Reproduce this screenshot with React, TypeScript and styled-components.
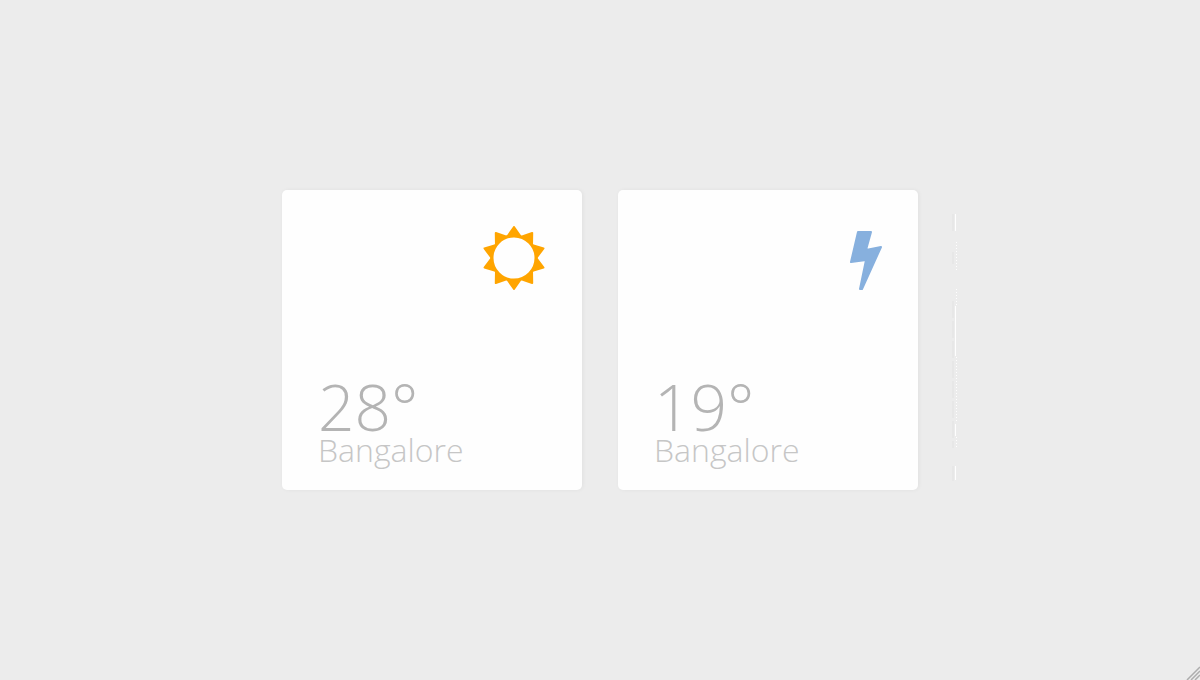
import React from "react";
import styled, { createGlobalStyle } from "styled-components";

const GlobalStyle = createGlobalStyle`
  * { box-sizing: border-box; }
  body { margin: 0; background: #ececec; font-family: "Open Sans", sans-serif; }
`;

const Page = styled.main`
  position: relative;
  min-height: 100vh;
  display: flex;
  align-items: center;
  justify-content: center;
`;

const Cards = styled.div`
  position: relative;
  display: flex;
  flex-wrap: wrap;
  justify-content: center;
  gap: 36px;
`;

const Card = styled.article`
  width: 300px;
  height: 300px;
  padding: 36px 36px 24px;
  display: flex;
  flex-direction: column;
  justify-content: space-between;
  background: #fefefe;
  border-radius: 5px;
  box-shadow: 1px 0 4px rgba(0, 0, 0, 0.05);
`;

const Icon = styled.svg`
  display: block;
  height: 64px;
  align-self: flex-end;
`;

const Reading = styled.div`
  display: flex;
  flex-direction: column;
  font-weight: 300;
`;

const Temperature = styled.p`
  margin: 0;
  font-size: 64px;
  line-height: 54px;
  color: #b4b4b4;
`;

const City = styled.h2`
  margin: 0;
  font-size: 32px;
  font-weight: 300;
  line-height: 32px;
  color: #c6c6c6;
`;

const Edge = styled.svg`
  position: absolute;
  left: calc(100% + 34px);
  top: 24px;
`;

const Grip = styled.svg`
  position: absolute;
  right: 0;
  bottom: 0;
`;

const rays = Array.from({ length: 10 }, (_, i) => i * 36);

const Sun = () => (
  <Icon width="64" height="64" viewBox="0 0 64 64" aria-hidden="true">
    <g fill="#ffa500" stroke="#ffa500" strokeWidth="2" strokeLinejoin="round">
      {rays.map((a) => (
        <path key={a} d="M32 1L39 11H25Z" transform={`rotate(${a} 32 32)`} />
      ))}
    </g>
    <circle cx="32" cy="32" r="22" fill="#fefefe" stroke="#ffa500" strokeWidth="3" />
  </Icon>
);

const Bolt = () => (
  <Icon width="32" height="64" viewBox="0 0 32 64" aria-hidden="true">
    <path
      d="M8 6H21L16 24L31 21L12 63H10L16 34L1 36Z"
      fill="#87b0de"
      stroke="#87b0de"
      strokeWidth="2"
      strokeLinejoin="round"
    />
  </Icon>
);

const forecasts = [
  { temperature: 28, city: "Bangalore", icon: <Sun /> },
  { temperature: 19, city: "Bangalore", icon: <Bolt /> },
];

export default function App() {
  return (
    <>
      <GlobalStyle />
      <Page>
        <Cards>
          {forecasts.map((f) => (
            <Card key={f.temperature}>
              {f.icon}
              <Reading>
                <Temperature>{f.temperature}°</Temperature>
                <City>{f.city}</City>
              </Reading>
            </Card>
          ))}
          <Edge width="6" height="270" viewBox="0 0 6 270" fill="none" aria-hidden="true">
            <path d="M1 0V17M1 38V50M1 87V234M1 252V267" stroke="#e7e7e7" strokeWidth="2" strokeDasharray="17 3" />
            <path d="M3.500 0V17M3.500 92V142M3.500 210V222M3.500 252V266" stroke="#fefefe" />
            <path d="M4.500 28V56M4.500 75V91M4.500 143V209M4.500 223V234" stroke="#fefefe" strokeDasharray="1 2" />
          </Edge>
        </Cards>
        <Grip width="14" height="14" viewBox="0 0 14 14" fill="none" aria-hidden="true">
          <path d="M1 14L14 1M5 14L14 5M9 14L14 9" stroke="#adadad" strokeWidth="1.500" />
        </Grip>
      </Page>
    </>
  );
}
